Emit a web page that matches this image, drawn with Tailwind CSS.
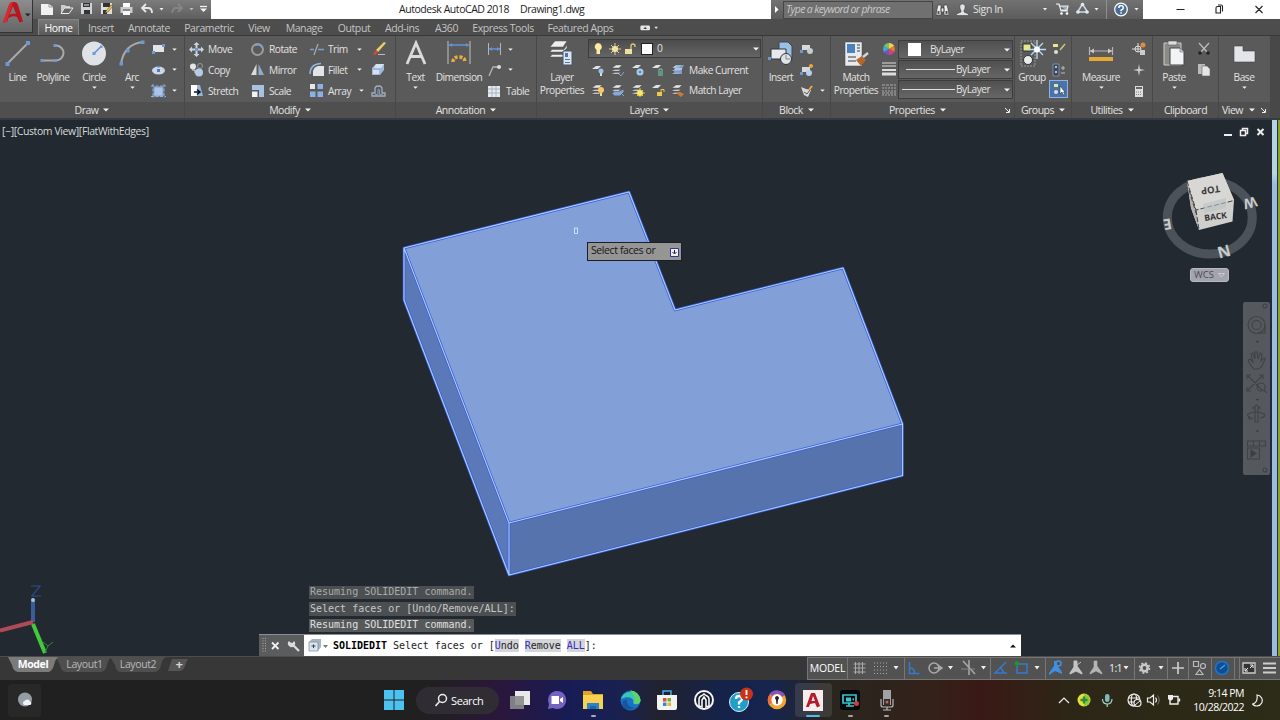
<!DOCTYPE html>
<html lang="en">
<head>
    <meta charset="UTF-8">
    <meta name="viewport" content="width=device-width, initial-scale=1.0">
    <title>Autodesk AutoCAD 2018 - Drawing1.dwg</title>
    <script src="https://cdn.jsdelivr.net/npm/@tailwindcss/browser@4"></script>
</head>
<body class="w-[1280px] h-[720px] overflow-hidden bg-[#222930] font-['Open_Sans',sans-serif] text-[10.5px] leading-none tracking-[-0.4px] whitespace-nowrap text-[#e2e2e2]">
    <!-- shared icon shapes -->
    <svg class="hidden">
        <symbol id="caret" viewBox="0 0 6 4"><path d="M0 .5h6L3 3.6z" fill="#f2f2f2"/></symbol>
        <symbol id="sheets" viewBox="0 0 14 14"><path d="M1 5l4-3h6L8 5zM1 7.500l3-1h5l2-1.500L8 8H1zM1 10.500l3-1h5l2-1.500L8 11H1z" fill="#e4e6e8" stroke="#4a4a4a" stroke-width=".4"/></symbol>
    </svg>

    <div class="flex flex-col h-[720px]">
        <!-- title bar -->
        <header class="relative flex h-[19px] shrink-0 bg-white">
            <div class="absolute left-0 top-0 z-10 flex items-center w-[33px] h-[33px] border-r border-b border-[#333] bg-linear-to-b from-[#8d8d8d] to-[#666]">
                <svg class="w-[32px] h-[32px] shrink-0" viewBox="0 0 32 32"><path d="M3 22.500L9 5q1-3 4-3h1.500q2.500 0 3.500 3l5 16.500-3.500 1-2.500-5.500q-4-2-8.500 1l-1.500 4z" fill="#bb1620"/><path d="M9.500 14.500L13 6l3 8q-3-1-6.500.5z" fill="#7a7a7a"/><path d="M9 5q1-3 4-3L6.500 22H3z" fill="#d92a34"/><path d="M25 13.500h5.500L27.750 16.500z" fill="#222"/></svg>
            </div>
            <div class="flex items-center w-[211px] pl-[39px] bg-linear-to-b from-[#7c7c7c] to-[#5e5e5e]">
                <svg class="w-[172px] h-[19px]" viewBox="39 0 172 19">
                    <path d="M41 4h8l4 3v8H41z" fill="#f1f1f1"/><path d="M49 4v3h4" fill="none" stroke="#999"/>
                    <path d="M61 5h4l1 1h4v2h-6l-3 5z" fill="#ccc"/><path d="M61 13.500L64.500 8H73l-4 5.500z" fill="#666" stroke="#eee"/>
                    <path d="M81 3h11v11H81z" fill="#cfd2d6"/><path d="M83 3h7v4h-7zM84 10h6v4h-6z" fill="#333"/><path d="M84 4.500h5v1h-5z" fill="#eee"/>
                    <path d="M101 3h11v11h-11z" fill="#dedede"/><path d="M103 3h7v4h-7zM103 10h4v4h-4z" fill="#333"/><path d="M106 11l5-6 2 1-5 6-3 1z" fill="#efbd4c" stroke="#503b15" stroke-width=".5"/>
                    <path d="M123 3h7v4h-7z" fill="#fff"/><path d="M120.500 7h12v6h-12z" fill="#c9ccd0"/><path d="M123 11h7v4h-7z" fill="#f8f8f8"/><path d="M123 10h7" stroke="#444"/>
                    <path d="M142 8h6q4 0 4 5M146 4l-4 4 4 4" fill="none" stroke="#e5e8eb" stroke-width="1.800"/><path d="M159.500 8h4l-2 2.500z" fill="#eee"/>
                    <path d="M181 8h-5q-3 0-4 5M178 4l4 4-4 4" fill="none" stroke="#858585" stroke-width="1.800"/><path d="M189.500 8h4l-2 2.500z" fill="#bbb"/>
                    <path d="M200 6.500h7" stroke="#f3f3f3" stroke-width="1.300"/><path d="M200 8.500h7L203.500 12z" fill="#f3f3f3"/>
                </svg>
            </div>
            <div class="flex items-center w-[560px] pl-[188px] gap-[11px] text-[#1c1c1c] tracking-[-0.45px]">
                <span>Autodesk AutoCAD 2018</span>
                <span>Drawing1.dwg</span>
            </div>
            <div class="flex items-center w-[372px] bg-linear-to-b from-[#727272] to-[#5c5c5c]">
                <svg class="w-[12px] h-[19px]" viewBox="0 0 12 19"><path d="M4 6v7l3.500-3.500z" fill="#fff"/></svg>
                <div class="w-[150px] h-[18px] flex items-center pl-[2px] border border-[#454545] bg-[#707070] italic text-[#c9c9c9] tracking-[-0.65px] word-spacing-[1px]">Type a keyword or phrase</div>
                <svg class="ml-[3px] w-[13px] h-[14px]" viewBox="0 0 13 14"><path d="M1 6l1-4h3v10H0zM12 6l-1-4H8v10h5zM5 5h3v4H5z" fill="#eee" stroke="#333" stroke-width=".6"/><path d="M1.500 8h2v3h-2zM9.500 8h2v3h-2z" fill="#555"/></svg>
                <svg class="ml-[7px] w-[13px] h-[14px]" viewBox="0 0 13 14"><path d="M6.500 1C3 1 3.500 5 5 7.500v1.500L.5 11v1.500h12V11L8 9V7.500C9.500 5 10 1 6.500 1z" fill="#dfe3e8" stroke="#333" stroke-width=".5"/></svg>
                <span class="ml-[4px] w-[70px]">Sign In</span>
                <svg class="w-[98px] h-[19px]" viewBox="1044 0 98 19">
                    <path d="M1044 8h4l-2 2.500zM1095.500 8h4l-2 2.500zM1135.500 8h4l-2 2.500z" fill="#eee"/>
                    <path d="M1057 4h3l2 7h7M1061 6h8l-1 4h-6" fill="#9ab" stroke="#e8edf2" stroke-width="1.200"/><circle cx="1062.500" cy="13.500" r="1.300" fill="#fff"/><circle cx="1068" cy="13.500" r="1.300" fill="#fff"/>
                    <path d="M1083.500 4l-5 8h10z" fill="none" stroke="#cdd8e4" stroke-width="1.500"/><circle cx="1083.500" cy="4.500" r="1.800" fill="#dfe9f3"/><circle cx="1079" cy="12" r="1.800" fill="#dfe9f3"/><circle cx="1088" cy="12" r="1.800" fill="#dfe9f3"/>
                    <path d="M1107.500 0v19" stroke="#909090"/>
                    <circle cx="1122" cy="9.500" r="6.300" fill="#4a6d93" stroke="#fff" stroke-width="1.200"/><path d="M1119.800 8q0-2.400 2.300-2.400T1124.300 8q0 1.200-2.200 2.200v1M1122.100 12.300v1.500" fill="none" stroke="#fff" stroke-width="1.500"/>
                </svg>
            </div>
            <svg class="w-[137px] h-[19px]" viewBox="1143 0 137 19"><path d="M1176.500 9.500h8M1216 8q0-1.500 1.500-1.500h3v6.500h-4.500zM1218 5h3q1.500 0 1.500 1.500v5M1255.500 6l7 7m0-7l-7 7" fill="none" stroke="#222" stroke-width="1.100"/></svg>
        </header>

        <!-- ribbon tabs -->
        <nav class="flex h-[17px] shrink-0 pl-[38px] bg-[#4d4d4d] text-[#c4c4c4] border-b border-[#383838] *:flex *:items-center *:justify-center *:pt-[2px]">
            <span class="w-[41px] mr-[2px] bg-linear-to-b from-[#777] to-[#595959] border border-b-0 border-[#858585] text-white">Home</span>
            <span class="w-[40px]">Insert</span>
            <span class="w-[56px]">Annotate</span>
            <span class="w-[64px]">Parametric</span>
            <span class="w-[36px]">View</span>
            <span class="w-[54px]">Manage</span>
            <span class="w-[46px]">Output</span>
            <span class="w-[50px]">Add-ins</span>
            <span class="w-[39px]">A360</span>
            <span class="w-[74px]">Express Tools</span>
            <span class="w-[81px]">Featured Apps</span>
            <svg class="ml-[17px] w-[24px] h-[16px]" viewBox="0 0 24 16"><rect x="1" y="5" width="11" height="5.500" rx="1.500" fill="#e5e5e5"/><path d="M4.500 9L6.500 6.500 8.500 9z" fill="#444"/><path d="M17 6.500h4l-2 2.500z" fill="#eee"/></svg>
        </nav>

        <!-- ribbon panels -->
        <section class="flex h-[84px] shrink-0 bg-[#484848] border-b-2 border-[#343b42] text-[10.2px] tracking-[-0.5px] *:flex *:flex-col *:shrink-0 *:border-r *:border-[#484848] *:bg-[#5a5a5a]">
            <!-- Draw -->
            <div class="w-[185px]">
                <div class="flex h-[66px] pt-[3px]">
                    <div class="flex flex-col items-center w-[35px]">
                        <svg class="w-[28px] h-[30px]" viewBox="0 0 28 30"><path d="M3 25L24 4" stroke="#a9a9a9" stroke-width="2"/><path d="M1.500 23h4v4h-4zM22 2h4v4h-4z" fill="#6d98d6"/></svg>
                        <span class="mt-[3px]">Line</span>
                    </div>
                    <div class="flex flex-col items-center w-[36px]">
                        <svg class="w-[30px] h-[30px]" viewBox="0 0 30 30"><path d="M4 21.500h14a7 7 0 0 0 0-15" fill="none" stroke="#a9a9a9" stroke-width="2"/><path d="M2.500 20h3v3h-3zM16 20h3v3h-3zM15.500 5h3v3h-3z" fill="#6d98d6"/></svg>
                        <span class="mt-[3px]">Polyline</span>
                    </div>
                    <div class="flex flex-col items-center w-[46px]">
                        <svg class="w-[28px] h-[30px]" viewBox="0 0 28 30"><circle cx="14" cy="14.500" r="12" fill="#dfe2e7"/><path d="M14 14.500l7-7" stroke="#5f8ed0" stroke-width="1.500"/><path d="M12.500 13h3v3h-3zM20 6.500h2.500V9H20z" fill="#6d98d6"/></svg>
                        <span class="mt-[3px]">Circle</span>
                        <svg class="mt-[4px] w-[5px] h-[3px]"><use href="#caret"/></svg>
                    </div>
                    <div class="flex flex-col items-center w-[30px]">
                        <svg class="w-[28px] h-[30px]" viewBox="0 0 28 30"><path d="M3 25Q6 5 25 3" fill="none" stroke="#a9a9a9" stroke-width="2"/><path d="M1.500 23h3.500v3.500H1.500zM8 10h3.500v3.500H8zM23 1.500h3.500V5H23z" fill="#6d98d6"/></svg>
                        <span class="mt-[3px]">Arc</span>
                        <svg class="mt-[4px] w-[5px] h-[3px]"><use href="#caret"/></svg>
                    </div>
                    <div class="grid grid-rows-3 h-[62px] pl-[4px] *:flex *:items-center *:gap-[6px]">
                        <div><svg class="w-[15px] h-[14px]" viewBox="0 0 15 14"><path d="M2 3h11v7H2z" fill="#e2e5e8"/><path d="M1 9h3v3H1zM11 2h3v3h-3z" fill="#6d98d6"/></svg><svg class="w-[5px] h-[3px]"><use href="#caret"/></svg></div>
                        <div><svg class="w-[15px] h-[14px]" viewBox="0 0 15 14"><ellipse cx="7.500" cy="7.500" rx="6.500" ry="4" fill="#ccd6e4"/><path d="M6 6h3v3H6zM6.500 2.500h2v2h-2z" fill="#4c7ec4"/></svg><svg class="w-[5px] h-[3px]"><use href="#caret"/></svg></div>
                        <div><svg class="w-[15px] h-[14px]" viewBox="0 0 15 14"><path d="M3 3h9v9H3z" fill="#aac3e8" stroke="#82a4d8"/><path d="M2 0v14M13 0v14M0 2h15M0 12.500h15" stroke="#91b0df" stroke-dasharray="3 1.500"/></svg><svg class="w-[5px] h-[3px]"><use href="#caret"/></svg></div>
                    </div>
                </div>
                <div class="flex items-center justify-center gap-[5px] h-[16px] bg-[#4f4f4f] text-[10.5px]">Draw <svg class="w-[6px] h-[4px]"><use href="#caret"/></svg></div>
            </div>
            <!-- Modify -->
            <div class="w-[211px]">
                <div class="grid grid-cols-[61px_59px_62px_20px] grid-rows-3 h-[66px] pt-[3px] pb-[1px] pl-[4px] *:flex *:items-center *:gap-[4px]">
                    <div><svg class="w-[15px] h-[15px]" viewBox="0 0 15 15"><path d="M7.500 0l3 3h-2v3h-2V3h-2zM7.500 15l3-3h-2V9h-2v3h-2zM0 7.500l3-3v2h3v2H3v2zM15 7.500l-3-3v2H9v2h3v2z" fill="#c9d4e2"/><path d="M6 6h3v3H6z" fill="#6d98d6"/></svg>Move</div>
                    <div><svg class="w-[15px] h-[15px]" viewBox="0 0 15 15"><circle cx="7.500" cy="7.500" r="5.500" fill="none" stroke="#9c9c9c" stroke-width="2"/><path d="M5 3.500A5.500 5.500 0 0 1 12.500 6" fill="none" stroke="#7aa0dc" stroke-width="1.500"/></svg>Rotate</div>
                    <div><svg class="w-[15px] h-[15px]" viewBox="0 0 15 15"><path d="M1 7.500h4M9 7.500h6" stroke="#779ed8" stroke-width="1.300"/><path d="M5 13l4-11" stroke="#a9a9a9" stroke-width="1.300"/></svg>Trim<svg class="ml-[5px] w-[5px] h-[3px]"><use href="#caret"/></svg></div>
                    <div><svg class="w-[15px] h-[15px]" viewBox="0 0 15 15"><path d="M5 8l8-8 2 1-8 9z" fill="#efcf63"/><path d="M2 12l3-4 2 2-3 3z" fill="#d84836"/><path d="M7 12.500h7" stroke="#bbb"/></svg></div>
                    <div><svg class="w-[15px] h-[15px]" viewBox="0 0 15 15"><circle cx="4" cy="4.500" r="3" fill="#e3e6ea"/><circle cx="11" cy="4" r="2.500" fill="none" stroke="#999"/><circle cx="10" cy="10.500" r="4" fill="#b6cbea"/><path d="M3 8h3v3" stroke="#ddd" fill="none"/></svg>Copy</div>
                    <div><svg class="w-[15px] h-[15px]" viewBox="0 0 15 15"><path d="M6.500 2v11H1z" fill="#d9dcdf"/><path d="M8.500 2v11H14z" fill="#8eacd0"/></svg>Mirror</div>
                    <div><svg class="w-[15px] h-[15px]" viewBox="0 0 15 15"><path d="M4 14V9q1-4 5-5h6v10z" fill="#e2e5e8"/><path d="M1 12Q1 2 12 1.500" fill="none" stroke="#8fb5e8" stroke-width="1.500"/></svg>Fillet<svg class="ml-[6px] w-[5px] h-[3px]"><use href="#caret"/></svg></div>
                    <div><svg class="w-[15px] h-[15px]" viewBox="0 0 15 15"><path d="M1 6l4-4h8v6l-4 5H1z" fill="#9eb9de"/><path d="M5 2h8l-3 4H3zM2 8h6v4H2z" fill="#d7e2f0"/></svg></div>
                    <div><svg class="w-[15px] h-[15px]" viewBox="0 0 15 15"><path d="M2 2h6v11H2z" fill="#fff"/><path d="M8 2h3l3 11H8z" fill="#8fb4df"/><path d="M5 9h5M8 6.500L11 9l-3 2.500" stroke="#111" stroke-width="1.500" fill="none"/></svg>Stretch</div>
                    <div><svg class="w-[15px] h-[15px]" viewBox="0 0 15 15"><path d="M2 2h12v12H9V7H2z" fill="#a9c2e4"/><path d="M2 8.500h5.500V14H2z" fill="#f0f1f3"/></svg>Scale</div>
                    <div><svg class="w-[15px] h-[15px]" viewBox="0 0 15 15"><path d="M1 1h5v5H1z" fill="#e7e7e7"/><path d="M8.500 1H14v5H8.500zM1 8.500h5.500V14H1zM8.500 8.500H14V14H8.500z" fill="#8cb0e3"/></svg>Array<svg class="ml-[4px] w-[5px] h-[3px]"><use href="#caret"/></svg></div>
                    <div><svg class="w-[15px] h-[15px]" viewBox="0 0 15 15"><path d="M1 13h13v-3h-3V6q0-3-3.500-3T4 6v4H1z" fill="none" stroke="#a3b0bf" stroke-width="1.300"/><path d="M4 11.500h3V6.500q1-1 1.500 0v5h3" fill="none" stroke="#8399b5"/></svg></div>
                </div>
                <div class="flex items-center justify-center gap-[5px] h-[16px] bg-[#4f4f4f] text-[10.5px]">Modify <svg class="w-[6px] h-[4px]"><use href="#caret"/></svg></div>
            </div>
            <!-- Annotation -->
            <div class="w-[141px]">
                <div class="flex h-[66px] pt-[3px]">
                    <div class="flex flex-col items-center w-[39px]">
                        <svg class="w-[26px] h-[30px]" viewBox="0 0 26 30"><path d="M4 25L13 4l9 21M7 17.500h12" fill="none" stroke="#dadada" stroke-width="2.800"/></svg>
                        <span class="mt-[3px]">Text</span>
                        <svg class="mt-[4px] w-[5px] h-[3px]"><use href="#caret"/></svg>
                    </div>
                    <div class="flex flex-col items-center w-[48px]">
                        <svg class="w-[26px] h-[30px]" viewBox="0 0 26 30"><path d="M2 2v23M24 2v23" stroke="#a9a9a9" stroke-width="1.300"/><path d="M3 6h20" stroke="#6592d8" stroke-width="1.500"/><path d="M3 6l3-2v4zM23 6l-3-2v4z" fill="#6592d8"/><path d="M7 23q0-5 6-5t6 5" fill="none" stroke="#e6ad3c" stroke-width="3.500" stroke-dasharray="3 1.500"/></svg>
                        <span class="mt-[3px]">Dimension</span>
                    </div>
                    <div class="grid grid-rows-3 h-[62px] pl-[4px] *:flex *:items-center *:gap-[6px]">
                        <div><svg class="w-[15px] h-[14px]" viewBox="0 0 15 14"><path d="M1.500 1v12M13.500 1v12" stroke="#b5b5b5"/><path d="M2 7h11" stroke="#6592d8" stroke-width="1.500"/><path d="M2 7l3-2v4zM13 7l-3-2v4z" fill="#6592d8"/></svg><svg class="w-[5px] h-[3px]"><use href="#caret"/></svg></div>
                        <div><svg class="w-[15px] h-[14px]" viewBox="0 0 15 14"><path d="M2 13l4-9h5" fill="none" stroke="#b5b5b5" stroke-width="1.300"/><circle cx="12" cy="4" r="2" fill="#ddd"/></svg><svg class="w-[5px] h-[3px]"><use href="#caret"/></svg></div>
                        <div class="gap-[5px]!"><svg class="w-[14px] h-[14px]" viewBox="0 0 14 14"><path d="M1 2h12v11H1z" fill="#e6e9ed"/><path d="M1 5h12M1 9h12M5 2v11M9 2v11" stroke="#9baabd" stroke-width=".8"/></svg>Table</div>
                    </div>
                </div>
                <div class="flex items-center justify-center gap-[5px] h-[16px] bg-[#4f4f4f] text-[10.5px]">Annotation <svg class="w-[6px] h-[4px]"><use href="#caret"/></svg></div>
            </div>
            <!-- Layers -->
            <div class="w-[226px]">
                <div class="flex h-[66px] pt-[3px]">
                    <div class="flex flex-col items-center w-[50px]">
                        <svg class="w-[28px] h-[30px]" viewBox="0 0 28 30"><path d="M2 8l5-6h12l-4 6zM2 13l2-2.500h12L19 6v3l-4 4zM2 18l2-2.500h12l3-4v3L15 18z" fill="#eceef0" stroke="#555" stroke-width=".5"/><path d="M15 12h9v14h-9z" fill="#dfe5ee" stroke="#456"/><path d="M17 14h3v4h-3zM17 20h5v1h-5zM17 23h5v1h-5z" fill="#4a76b4"/></svg>
                        <span class="mt-[3px]">Layer</span>
                        <span class="mt-[3px]">Properties</span>
                    </div>
                    <div class="w-[175px] pl-[1px]">
                        <div class="flex items-center w-[173px] h-[19px] pl-[3px] border border-[#3c3c3c] bg-linear-to-b from-[#4c4c4c] to-[#656565]">
                            <svg class="w-[56px] h-[16px]" viewBox="0 0 56 16"><path d="M6 2a3.800 3.800 0 0 1 2 7v4H4.500V9A3.800 3.800 0 0 1 6 2z" fill="#ffe9a0"/><circle cx="23" cy="8" r="3" fill="#fff1a5"/><path d="M23 2v12M17 8h12M19 4l8 8M27 4l-8 8" stroke="#e9dfa1" stroke-width=".9"/><path d="M33 8h7v5h-7z" fill="#efe0a2"/><path d="M39 8V5q0-2 2-2t2 2v1" fill="none" stroke="#dcca83" stroke-width="1.300"/></svg>
                            <span class="-ml-[7px] w-[12px] h-[12px] bg-white border border-[#222]"></span>
                            <span class="ml-[4px] w-[96px]">0</span>
                            <svg class="w-[6px] h-[4px]"><use href="#caret"/></svg>
                        </div>
                        <div class="flex items-center h-[21px] pl-[3px] pt-[3px] gap-[6px]">
                            <svg class="w-[14px] h-[14px]" viewBox="0 0 14 14"><path d="M1 6l4-3h5L7 6z" fill="#dfe3e7"/><circle cx="10" cy="8" r="2.500" fill="#9cc2ee"/><path d="M9 10h2v3H9z" fill="#ddd"/></svg>
                            <svg class="w-[14px] h-[14px]" viewBox="0 0 14 14"><use href="#sheets"/><path d="M8 11l2 2 3-4" stroke="#7ba5dc" fill="none"/></svg>
                            <svg class="w-[14px] h-[14px]" viewBox="0 0 14 14"><path d="M1 5l4-3h5L7 5z" fill="#dfe3e7"/><circle cx="9" cy="9" r="3.500" fill="#a8c8ef"/><circle cx="9" cy="9" r="1.300" fill="#5588cb"/></svg>
                            <svg class="w-[14px] h-[14px]" viewBox="0 0 14 14"><path d="M1 5l4-3h5L7 5z" fill="#dfe3e7"/><path d="M7 8h5v5H7z" fill="#5d9884"/><path d="M8 8V6h3v2" stroke="#88b8aa" fill="none"/></svg>
                            <svg class="w-[14px] h-[14px]" viewBox="0 0 14 14"><use href="#sheets"/><path d="M3 6l3-4h7l-2 4v5H3z" fill="#88aedf" opacity=".8"/><path d="M4 6h7" stroke="#dce8f6"/></svg>
                            <span class="-ml-[2px]">Make Current</span>
                        </div>
                        <div class="flex items-center h-[20px] pl-[3px] pt-[2px] gap-[6px]">
                            <svg class="w-[14px] h-[14px]" viewBox="0 0 14 14"><use href="#sheets"/><circle cx="10" cy="7" r="3" fill="#ffc55b"/><path d="M9 10h2v3H9z" fill="#edd9a6"/></svg>
                            <svg class="w-[14px] h-[14px]" viewBox="0 0 14 14"><use href="#sheets"/><path d="M3 9h6l3-2v2l-3 3H3zM9 9l4 4" fill="#83a9dc" stroke="#83a9dc"/></svg>
                            <svg class="w-[14px] h-[14px]" viewBox="0 0 14 14"><use href="#sheets"/><circle cx="9" cy="10" r="3" fill="#ffe65d"/><path d="M9 5v9M5 10h9M6 7l6 6M12 7l-6 6" stroke="#ffe65d" stroke-width=".8"/></svg>
                            <svg class="w-[14px] h-[14px]" viewBox="0 0 14 14"><path d="M1 5l4-3h5L7 5z" fill="#dfe3e7"/><path d="M6 9h5v4H6z" fill="#f0c84e"/><path d="M10 9V6.500h3V9" stroke="#f0c84e" fill="none"/></svg>
                            <svg class="w-[14px] h-[14px]" viewBox="0 0 14 14"><use href="#sheets"/><path d="M5 10l4-1 4 2-3 3z" fill="#d17830"/></svg>
                            <span class="-ml-[2px]">Match Layer</span>
                        </div>
                    </div>
                </div>
                <div class="flex items-center justify-center gap-[5px] h-[16px] bg-[#4f4f4f] text-[10.5px]">Layers <svg class="w-[6px] h-[4px]"><use href="#caret"/></svg></div>
            </div>
            <!-- Block -->
            <div class="w-[68px]">
                <div class="flex h-[66px] pt-[3px]">
                    <div class="flex flex-col items-center w-[36px]">
                        <svg class="w-[28px] h-[30px]" viewBox="0 0 28 30"><path d="M12 3h9l4 4v14H12z" fill="#9cbfe6" stroke="#36465a"/><path d="M4 10h15v10H4z" fill="#e6e9ec" stroke="#333"/><circle cx="19" cy="20" r="5.500" fill="#dfe3e7" stroke="#333"/><path d="M19 16v4h4" stroke="#888" fill="none"/><path d="M1 18h3v3H1z" fill="#6d98d6"/></svg>
                        <span class="mt-[3px]">Insert</span>
                    </div>
                    <div class="grid grid-rows-3 h-[62px] *:flex *:items-center *:gap-[6px]">
                        <div><svg class="w-[15px] h-[14px]" viewBox="0 0 15 14"><path d="M3 3h8v5H3z" fill="#d6dade"/><circle cx="11" cy="9" r="3" fill="#c7cbd0"/><path d="M1 8h3v3H1z" fill="#6d98d6"/></svg></div>
                        <div><svg class="w-[15px] h-[14px]" viewBox="0 0 15 14"><path d="M3 4h8v5H3z" fill="#d6dade"/><circle cx="10" cy="10" r="3" fill="#b7cfe9"/><path d="M1 9h3v3H1z" fill="#6d98d6"/><circle cx="12" cy="3" r="2" fill="#f0a63c"/></svg></div>
                        <div><svg class="w-[15px] h-[14px]" viewBox="0 0 15 14"><path d="M2 3l5 2 5 1-3 7-4-2z" fill="#d6dade"/><path d="M5 8l3 2 5-7" stroke="#555" fill="none"/><path d="M10 6l3-4" stroke="#f0a63c" stroke-width="2"/></svg><svg class="w-[5px] h-[3px]"><use href="#caret"/></svg></div>
                    </div>
                </div>
                <div class="flex items-center justify-center gap-[5px] h-[16px] bg-[#4f4f4f] text-[10.5px]">Block <svg class="w-[6px] h-[4px]"><use href="#caret"/></svg></div>
            </div>
            <!-- Properties -->
            <div class="w-[184px]">
                <div class="flex h-[66px] pt-[3px]">
                    <div class="flex flex-col items-center w-[50px]">
                        <svg class="w-[28px] h-[30px]" viewBox="0 0 28 30"><path d="M3 3h17v24H3z" fill="#e7eaee" stroke="#444" stroke-width=".5"/><path d="M5 5h8v9H5z" fill="#4b82bb"/><path d="M15 6h3M15 9h3M15 12h3M6 18h8M6 22h8" stroke="#777" stroke-width="1.300"/><path d="M14 21l6-4 4 4-5 6z" fill="#b5662a"/><path d="M21 18l5-4" stroke="#d5d5d5" stroke-width="2.500"/></svg>
                        <span class="mt-[3px]">Match</span>
                        <span class="mt-[3px]">Properties</span>
                    </div>
                    <div class="grid grid-rows-3 w-[17px] h-[61px] pl-[1px] items-center">
                        <svg class="w-[14px] h-[14px]" viewBox="0 0 14 14"><path d="M7 7V1a6 6 0 0 1 5.200 3z" fill="#f0d54b"/><path d="M7 7l5.200-3a6 6 0 0 1 0 6z" fill="#e57834"/><path d="M7 7l5.200 3A6 6 0 0 1 7 13z" fill="#d64078"/><path d="M7 7v6a6 6 0 0 1-5.200-3z" fill="#6d56bd"/><path d="M7 7l-5.200 3a6 6 0 0 1 0-6z" fill="#46a4d0"/><path d="M7 7L1.800 4A6 6 0 0 1 7 1z" fill="#76c36c"/></svg>
                        <svg class="w-[14px] h-[14px]" viewBox="0 0 14 14"><path d="M0 1h14M0 4h14" stroke="#ddd"/><path d="M0 8h14" stroke="#ddd" stroke-width="2"/><path d="M0 12h14" stroke="#ddd" stroke-width="3"/></svg>
                        <svg class="w-[14px] h-[14px]" viewBox="0 0 14 14"><path d="M0 2h14M0 10h14" stroke="#aaa" stroke-dasharray="3 1"/><path d="M0 5h14M0 8h14M0 12h14" stroke="#aaa" stroke-dasharray="2 1"/></svg>
                    </div>
                    <div class="flex flex-col gap-[1px] pt-[1px] *:flex *:items-center *:w-[115px] *:h-[19px] *:border *:border-[#3c3c3c] *:bg-linear-to-b *:from-[#505050] *:to-[#666]">
                        <div><span class="ml-[9px] w-[13px] h-[13px] bg-white"></span><span class="ml-[9px] w-[74px]">ByLayer</span><svg class="w-[6px] h-[4px]"><use href="#caret"/></svg></div>
                        <div><span class="ml-[7px] w-[49px] h-[1px] bg-[#ddd]"></span><span class="ml-[1px] w-[48px]">ByLayer</span><svg class="w-[6px] h-[4px]"><use href="#caret"/></svg></div>
                        <div><span class="ml-[3px] w-[53px] h-[1px] bg-[#ddd]"></span><span class="ml-[1px] w-[48px]">ByLayer</span><svg class="w-[6px] h-[4px]"><use href="#caret"/></svg></div>
                    </div>
                </div>
                <div class="flex items-center h-[16px] pl-[58px] pr-[4px] gap-[5px] bg-[#4f4f4f] text-[10.5px]">Properties <svg class="w-[6px] h-[4px]"><use href="#caret"/></svg><svg class="ml-auto w-[5px] h-[5px]" viewBox="0 0 5 5"><path d="M0 0l4 4M4.500 1v3.500H1" stroke="#eee" fill="none"/></svg></div>
            </div>
            <!-- Groups -->
            <div class="w-[57px]">
                <div class="flex h-[66px] pt-[3px]">
                    <div class="flex flex-col items-center w-[34px]">
                        <svg class="w-[28px] h-[30px]" viewBox="0 0 28 30"><path d="M3 2h14v25H3z" fill="none" stroke="#999" stroke-dasharray="2 1"/><path d="M5 5h8v7H5z" fill="#e6e88b" stroke="#333"/><circle cx="10" cy="21" r="4.500" fill="#e9ecef" stroke="#333"/><path d="M19 1v19M10 10.500h18M13 4l12 12M25 4L13 16" stroke="#b9dcf5" stroke-width="1.300"/><circle cx="19" cy="10.500" r="3" fill="#fff"/></svg>
                        <span class="mt-[3px]">Group</span>
                    </div>
                    <div class="grid grid-rows-3 w-[19px] h-[62px] *:flex *:items-center *:justify-center">
                        <div><svg class="w-[14px] h-[14px]" viewBox="0 0 14 14"><path d="M1 2h5v3H1z" fill="#e6e88b"/><circle cx="4" cy="10" r="2" fill="#ddd"/><path d="M8 8l5-6" stroke="#cfd06a" stroke-width="1.300"/></svg></div>
                        <div><svg class="w-[14px] h-[14px]" viewBox="0 0 14 14"><path d="M1 1h6v12H1z" fill="#3e4a58" stroke="#8aa4c4" stroke-width=".7"/><path d="M3 3h2v2H3zM3 8h2v2H3z" fill="#a9c4e4"/><path d="M9 5h4M11 3v4M9 10h4" stroke="#bbb"/></svg></div>
                        <div class="w-[19px] h-[18px] bg-[#4973a9] border border-[#8db4e4]"><svg class="w-[14px] h-[14px]" viewBox="0 0 14 14"><path d="M2 2h4v3H2z" fill="#e6e88b"/><circle cx="4" cy="10" r="2" fill="#ddd"/><path d="M8 4v8l2-2 1.500 3 1.500-1-1.500-2H13z" fill="#fff" stroke="#222" stroke-width=".5"/></svg></div>
                    </div>
                </div>
                <div class="flex items-center justify-center gap-[5px] h-[16px] bg-[#4f4f4f] text-[10.5px]">Groups <svg class="w-[6px] h-[4px]"><use href="#caret"/></svg></div>
            </div>
            <!-- Utilities -->
            <div class="w-[81px]">
                <div class="flex h-[66px] pt-[3px]">
                    <div class="flex flex-col items-center w-[58px]">
                        <svg class="w-[28px] h-[30px]" viewBox="0 0 28 30"><path d="M2.500 8v8M25.500 8v8M3 12h22" stroke="#b5b5b5" stroke-width="1.200"/><path d="M3 12l4-2.500v5zM25 12l-4-2.500v5z" fill="#ccc"/><path d="M2 18h24v4H2z" fill="#e6a934"/></svg>
                        <span class="mt-[3px]">Measure</span>
                        <svg class="mt-[4px] w-[5px] h-[3px]"><use href="#caret"/></svg>
                    </div>
                    <div class="grid grid-rows-3 w-[18px] h-[62px] items-center justify-items-center">
                        <svg class="w-[14px] h-[14px]" viewBox="0 0 14 14"><circle cx="6" cy="7" r="3" fill="none" stroke="#ddd"/><path d="M0 7h9M6 1v9" stroke="#ddd"/><circle cx="11" cy="3" r="2.500" fill="#e58b3a"/><path d="M8 8h5v5H8z" fill="#ccc"/></svg>
                        <svg class="w-[14px] h-[14px]" viewBox="0 0 14 14"><path d="M7 1l1 5 5 1-5 1-1 5-1-5-5-1 5-1z" fill="#ccc"/></svg>
                        <svg class="w-[14px] h-[14px]" viewBox="0 0 14 14"><path d="M3 2h8v11H3z" fill="#ddd"/><path d="M4 3h6v2H4z" fill="#666"/><path d="M4 8h6M4 10.500h6" stroke="#888" stroke-dasharray="1 1"/></svg>
                    </div>
                </div>
                <div class="flex items-center justify-center gap-[5px] h-[16px] bg-[#4f4f4f] text-[10.5px]">Utilities <svg class="w-[6px] h-[4px]"><use href="#caret"/></svg></div>
            </div>
            <!-- Clipboard -->
            <div class="w-[66px]">
                <div class="flex h-[66px] pt-[3px]">
                    <div class="flex flex-col items-center w-[42px]">
                        <svg class="w-[28px] h-[30px]" viewBox="0 0 28 30"><path d="M4 4h17v22H4z" fill="#8a8a86" stroke="#ccc"/><path d="M8 2h9v4H8z" fill="#ddd" stroke="#555" stroke-width=".6"/><path d="M10 9h10l4 4v13H10z" fill="#f2f3f5" stroke="#444"/><path d="M20 9v4h4" fill="#cbd0d6" stroke="#777" stroke-width=".6"/></svg>
                        <span class="mt-[3px]">Paste</span>
                        <svg class="mt-[4px] w-[5px] h-[3px]"><use href="#caret"/></svg>
                    </div>
                    <div class="grid grid-rows-3 w-[18px] h-[62px] items-center justify-items-center">
                        <svg class="w-[14px] h-[14px]" viewBox="0 0 14 14"><path d="M2 1l8 9M12 1L4 10" stroke="#bbb" stroke-width="1.300"/><circle cx="3" cy="11" r="1.800" fill="#222"/><circle cx="11" cy="11" r="1.800" fill="#222"/></svg>
                        <svg class="w-[14px] h-[14px]" viewBox="0 0 14 14"><path d="M1 1h7v10H1z" fill="#bbb"/><path d="M5 3h5l3 3v7H5z" fill="#e6e6e6" stroke="#666" stroke-width=".6"/></svg>
                    </div>
                </div>
                <div class="flex items-center justify-center h-[16px] bg-[#4f4f4f] text-[10.5px]">Clipboard</div>
            </div>
            <!-- View -->
            <div class="w-[52px]">
                <div class="flex h-[66px] pt-[3px]">
                    <div class="flex flex-col items-center w-[50px]">
                        <svg class="w-[28px] h-[30px]" viewBox="0 0 28 30"><path d="M4 7h9v5h12v11H4z" fill="#e3e5e8" stroke="#444" stroke-width=".6"/></svg>
                        <span class="mt-[3px]">Base</span>
                        <svg class="mt-[4px] w-[5px] h-[3px]"><use href="#caret"/></svg>
                    </div>
                </div>
                <div class="flex items-center gap-[6px] h-[16px] pl-[3px] pr-[4px] bg-[#4f4f4f] text-[10.5px]">View <svg class="w-[6px] h-[4px]"><use href="#caret"/></svg><svg class="ml-auto w-[5px] h-[5px]" viewBox="0 0 5 5"><path d="M0 0l4 4M4.500 1v3.500H1" stroke="#eee" fill="none"/></svg></div>
            </div>
        </section>

        <!-- drawing area -->
        <main class="relative h-[536px] shrink-0 bg-[#222930]">
            <svg class="absolute left-0 top-0 w-[1273px] h-[536px]" viewBox="0 120 1273 536">
                <path d="M404 248L629 192 675 310 843 268 902.500 424 509 523z" fill="#829fd8"/>
                <path d="M404 248V300L509 575V523z" fill="#5b78b8"/>
                <path d="M509 523L902.500 424V475.500L509 575z" fill="#5673ae"/>
                <g fill="none" stroke-linejoin="round">
                    <path d="M404 248L629 192 675 310 843 268 902.500 424V475.500L509 575 404 300zL509 523 902.500 424M509 523V575" stroke="#3460d4" stroke-width="2.600"/>
                    <path d="M404 248L629 192 675 310 843 268 902.500 424V475.500L509 575 404 300zL509 523 902.500 424M509 523V575" stroke="#b3c9fc" stroke-width="1.100"/>
                </g>
                <path d="M574.500 228h3v5.500h-3z" fill="none" stroke="#d4e6ff" stroke-width=".9"/>

                <!-- view cube -->
                <ellipse cx="1209.800" cy="217.500" rx="42.500" ry="36.500" fill="none" stroke="#4b5259" stroke-width="9"/>
                <path d="M1187 181L1222.500 173 1234 200 1232.500 221.500 1199 230 1191 208z" fill="#cfcfcd"/>
                <path d="M1187 181L1222.500 173 1234 200 1196 210z" fill="#d8d7d4"/>
                <path d="M1187 181L1196 210 1199 230 1191 208z" fill="#b4b4b2"/>
                <path d="M1187 181L1196 210 1234 200.500M1196 210l3 20M1189 190l8 26" fill="none" stroke="#444" stroke-dasharray="5 2"/>
                <path d="M1203 204l23-6v10l-22 5z" fill="#b9c3c4" opacity=".6"/>
                <g font-family="Open Sans" font-weight="700" text-anchor="middle" letter-spacing="0">
                    <text transform="translate(1210 186.500) rotate(172)" font-size="9.500" fill="#3b3b3b">TOP</text>
                    <text transform="translate(1216 219.500) rotate(-8)" font-size="8.500" fill="#333">BACK</text>
                    <text transform="translate(1249 198) rotate(165)" font-size="14" fill="#c9cccd">W</text>
                    <text transform="translate(1166.500 219) rotate(170)" font-size="15" fill="#c9cccd">E</text>
                    <text transform="translate(1222.500 246) rotate(165)" font-size="16" fill="#c9cccd">N</text>
                </g>

                <!-- UCS icon -->
                <path d="M33 622V600" stroke="#3a5b9c" stroke-width="4"/><circle cx="33" cy="600" r="2" fill="#a9bfe0"/>
                <path d="M33 622L0 630.500" stroke="#b04a58" stroke-width="4"/>
                <path d="M33 624L45 653" stroke="#44c83e" stroke-width="4"/>
                <path d="M31 586h9L32 596h9" fill="none" stroke="#274f94" stroke-width="1.200"/>
                <path d="M43 642l5 4 5-4M48 646l-3 6" fill="none" stroke="#2b8c32"/>
            </svg>

            <div class="absolute left-[2px] top-[6px] text-[#d8dadb]">[−][Custom View][FlatWithEdges]</div>
            <svg class="absolute left-[1222px] top-[6px] w-[46px] h-[12px]" viewBox="0 0 46 12"><path d="M2 8h8v2H2z" fill="#eee"/><path d="M18.500 4.500h5v5h-5zM20.500 4V2.500h5v5H24" fill="none" stroke="#eee" stroke-width="1.500"/><path d="M35.500 3l6 6m0-6l-6 6" stroke="#eee" stroke-width="2"/></svg>

            <!-- dynamic input prompt -->
            <div class="absolute left-[587px] top-[122px] flex items-center w-[95px] h-[19px] pl-[3px] bg-[#959596] border border-[#1b1e22] text-[#161616]">
                <span class="w-[79px] pb-[2px]">Select faces or</span>
                <svg class="w-[9px] h-[9px] mt-[2px]" viewBox="0 0 9 9"><path d="M.5.500h8v8h-8z" fill="#eee" stroke="#3c3197"/><path d="M2.500 4L4.500 6 6.500 4M4.500 2v3" stroke="#222" fill="none"/></svg>
            </div>

            <div class="absolute left-[1190px] top-[148px] flex items-center justify-between w-[39px] h-[14px] pl-[3px] pr-[3px] rounded-[3px] bg-[#a3a4ae] border border-[#b8b9c2] text-[9.5px] text-[#484b54] tracking-normal">WCS<svg class="w-[7px] h-[5px]" viewBox="0 0 7 5"><path d="M.5.500h6l-3 3.500z" fill="none" stroke="#c9cad3"/></svg></div>

            <!-- navigation bar -->
            <svg class="absolute left-[1243px] top-[182px] w-[27px] h-[173px]" viewBox="1243 302 27 173">
                <rect x="1243" y="302" width="27" height="173" rx="2" fill="#55595d"/>
                <g fill="none" stroke="#3f4347" stroke-width="1.100">
                    <circle cx="1265" cy="306" r="2"/><circle cx="1265" cy="470" r="2"/>
                    <circle cx="1256.500" cy="325" r="8.500"/><circle cx="1256.500" cy="325" r="4.500"/><path d="M1258 333h7v-8"/>
                    <path d="M1252 367q-3-4-4-7l2-1 3 3-2-8 2-1 2 6v-7h2l1 7 2-6 2 1-1 7 3-3 1 1-3 7q-3 4-8 3z"/>
                    <path d="M1248 376l14 14M1262 376l-14 14M1247 379v-4h4M1259 375h4v4M1247 387v4h4"/><circle cx="1261" cy="387" r="4"/><path d="M1264 390l3 3"/>
                    <path d="M1255 408v14h3v-14l2 0-3.500-3-3.500 3zM1253 419q-7-3-5-5 8-4 16 0 3 3-4 4M1250 420l-2-4"/>
                    <path d="M1247.500 441h18v5h-18zM1253.500 441v5M1259.500 441v5M1247.500 448h12v11h-12z"/><path d="M1251 450v7l5-3.500z" fill="#3a3e42"/>
                </g>
                <path d="M1256 341h3l-1.500 2zM1256 399h3l-1.500 2zM1256 430.500h3l-1.500 2z" fill="#33373b"/>
            </svg>

            <!-- strip of the desktop behind the window -->
            <div class="absolute right-0 top-0 flex w-[8px] h-[536px]">
                <div class="w-[5px] bg-linear-to-b from-[#b7d3e6] from-10% to-[#9dbbe0] to-12%"></div>
                <div class="w-[1px] bg-[#26323a]"></div>
                <div class="w-[2px] bg-[#8ba32a]"></div>
            </div>

            <!-- command window -->
            <div class="absolute left-[259px] bottom-0 w-[762px]">
                <div class="flex flex-col items-start gap-[3px] pl-[50px] pb-[2px] font-['DejaVu_Sans_Mono',monospace] text-[10px] tracking-normal text-[#e0e0e0] *:h-[13.5px] *:px-[1px] *:flex *:items-center *:bg-[#4b4f51]">
                    <span class="text-[#a9abac]">Resuming SOLIDEDIT command.</span>
                    <span class="text-[#c6c7c8]">Select faces or [Undo/Remove/ALL]:</span>
                    <span class="bg-[#56595a]!">Resuming SOLIDEDIT command.</span>
                </div>
                <div class="flex items-center h-[22px] bg-white border-t border-[#8b8f93]">
                    <svg class="w-[45px] h-[21px] bg-[#5b5c5e]" viewBox="0 0 45 21"><path d="M4 3v15M6.500 3v15" stroke="#aaa" stroke-dasharray="1 1.500"/><path d="M13 7.500l6.500 6.500m0-6.500L13 14" stroke="#eee" stroke-width="1.800"/><path d="M33 9l7 7" stroke="#dcdcdc" stroke-width="2.300"/><path d="M30 6a3.500 3.500 0 0 0 5 5 3.500 3.500 0 0 0 0-5l-1.500 2-2-.5z" fill="#dcdcdc"/></svg>
                    <svg class="ml-[4px] w-[25px] h-[16px]" viewBox="0 0 25 16"><path d="M1 4l3-3h9v8l-3 4H1z" fill="#aab4c2"/><path d="M1 4h9v9H1z" fill="#dde3ec" stroke="#7b8899" stroke-width=".7"/><path d="M3.500 8h4M5.500 6.500v3.500" stroke="#345"/><path d="M15 7h5l-2.500 3z" fill="#777"/></svg>
                    <div class="font-['DejaVu_Sans_Mono',monospace] text-[10px] tracking-[-0.03px] text-[#222]"><b class="text-black">SOLIDEDIT</b> Select faces or [<span class="py-[1px] bg-[#d3d5d8]"><span class="text-[#3a2bc0]">U</span>ndo</span> <span class="py-[1px] bg-[#d3d5d8]"><span class="text-[#3a2bc0]">R</span>emove</span> <span class="py-[1px] bg-[#d3d5d8] text-[#3a2bc0]">ALL</span>]:</div>
                    <svg class="ml-auto mr-[5px] w-[6px] h-[4px]" viewBox="0 0 6 4"><path d="M0 3.500h6L3 .5z" fill="#111"/></svg>
                </div>
            </div>
        </main>

        <!-- layout tabs and status bar -->
        <footer class="flex justify-between h-[24px] shrink-0 bg-[#373737] border-t border-[#4c4c4c]">
            <div class="relative flex h-[15px] text-[#b9b9b9] *:relative *:flex *:items-center *:justify-center *:pb-[1px]">
                <svg class="absolute! left-0 top-0 w-[200px] h-[16px] pb-0!" viewBox="0 0 200 16"><path d="M56 0h56q-4 2-5 8t-6 7H66q-5 0-6-7zM110 0h56q-4 2-5 8t-6 7h-34q-5 0-6-7z" fill="#4f4f4f"/><path d="M172 2h16q-2 3-3 7t-5 5h-12q2-6 4-12z" fill="#555"/><path d="M8 0h50q-3 3-4 8t-5 7H18q-5-1-6-7z" fill="#7b7b7b"/></svg>
                <b class="w-[50px] ml-[8px] text-white">Model</b>
                <span class="w-[53px]">Layout1</span>
                <span class="w-[54px]">Layout2</span>
                <b class="w-[28px] text-[13px] text-[#d5d5d5]">+</b>
            </div>
            <div class="flex h-[23px] bg-[#525252] border-y border-[#757575]">
                <div class="flex items-center justify-center w-[41px] border-x border-[#757575] text-white tracking-[-0.2px]">MODEL</div>
                <svg class="w-[432px] h-[21px]" viewBox="848 658 432 21">
                    <path d="M855.500 662v12M859 662v12M862.500 662v12M853.500 664h12M853.500 668h12M853.500 672h12" stroke="#a9a9a9"/>
                    <path d="M874 663h13M874 666.500h13M874 670h13M874 673.500h13" stroke="#a9a9a9" stroke-dasharray="1 2"/>
                    <path d="M893.500 666h5l-2.500 3.500zM948 666h5l-2.500 3.500zM981 666h5l-2.500 3.500zM1034.500 666h5l-2.500 3.500zM1123.500 666h5l-2.500 3.500zM1158.500 666h5l-2.500 3.500z" fill="#eee"/>
                    <path d="M904.500 657v23M990.500 657v23M1045.500 657v23M1134.500 657v23M1167.500 657v23M1188.500 657v23M1211.500 657v23M1234.500 657v23M1239.500 657v23" stroke="#777"/>
                    <g fill="none" stroke="#3579d0" stroke-width="1.500"><path d="M909.500 662v11.500h10M909.500 668q5 0 5 5"/><path d="M1006 662l-11 11h12M1001 668l3 5"/><path d="M1018 664h9v9h-10v-7"/></g>
                    <circle cx="1017" cy="663.500" r="2.300" fill="#149c2d"/>
                    <g fill="none" stroke="#aaa" stroke-width="1.500"><circle cx="934" cy="668" r="5"/><path d="M934 668h8M938 665l4 3-4 3"/><path d="M963 661l12 13M969 660v15"/></g>
                    <path d="M961 669h14" stroke="#888"/>
                    <path d="M1054 661h3v4l5 7v2l-7-3-6 4v-2l5-7z" fill="#3f8fe4"/><circle cx="1058.500" cy="663.500" r="2.500" fill="none" stroke="#3f8fe4" stroke-width="1.500"/>
                    <path d="M1074 661h3v5l5 7v1l-6-3-6 3v-1l4-6zM1077 665l4-3" fill="#c4c4c4" stroke="#c4c4c4"/>
                    <path d="M1094 661h3v5l5 7v1l-6-3-6 3v-1l4-6z" fill="#b5b5b5" stroke="#b5b5b5" stroke-width=".6"/>
                    <circle cx="1144.500" cy="668" r="3.200" fill="none" stroke="#c8c8c8" stroke-width="2.600"/><circle cx="1144.500" cy="668" r="5" fill="none" stroke="#c8c8c8" stroke-width="1.600" stroke-dasharray="2 1.930"/>
                    <path d="M1178 662v12M1172 668h12" stroke="#ccc" stroke-width="1.700"/>
                    <path d="M1193.500 661.500h5v5h-5zM1199.500 669.500l-3.500 5h7z" fill="none" stroke="#bbb" stroke-width="1.200"/><circle cx="1203" cy="666" r="2.500" fill="none" stroke="#bbb" stroke-width="1.200"/>
                    <circle cx="1222" cy="668" r="6.500" fill="#0d4f91" stroke="#1a76cf" stroke-width="1.500"/><path d="M1220 669l5-4" stroke="#4aa0f0" stroke-width="1.300"/>
                    <path d="M1243 663h12v10h-12z" fill="#333" stroke="#ccc" stroke-width="1.300"/><path d="M1245 671l3-3M1253 665l-3 3M1245 668v3h3M1250 665h3v3" stroke="#eee" fill="none"/>
                    <path d="M1263 663.500h13M1263 668h13M1263 672.500h13" stroke="#ccc" stroke-width="1.800"/>
                    <text x="1109" y="672" font-size="10.500" fill="#eee" font-family="Open Sans" letter-spacing="-.6">1:1</text>
                </svg>
            </div>
        </footer>

        <!-- Windows taskbar -->
        <div class="flex items-center h-[40px] shrink-0 bg-[linear-gradient(90deg,#202020_0,#202020_430px,#2b163c_500px,#171c55_570px,#192150_620px,#22222e_660px,#15224a_720px,#16254e_770px,#29251f_830px,#33221a_930px,#3a1915_980px,#2c2616_1070px,#2c2c18_1280px)]">
            <div class="flex items-center justify-center w-[33px] h-[33px] ml-[8px] rounded bg-[#282828]">
                <svg class="w-[16px] h-[16px]" viewBox="0 0 16 16"><circle cx="8" cy="7.500" r="7" fill="#959ca3"/><path d="M7 13a2.200 2.200 0 0 1 .5-4 3 3 0 0 1 5.500.5 1.800 1.800 0 0 1 0 3.500z" fill="#eef2f6"/></svg>
            </div>
            <svg class="ml-[343px] w-[20px] h-[20px]" viewBox="0 0 20 20"><path d="M0 0h9.500v9.500H0zM10.500 0H20v9.500h-9.500zM0 10.500h9.500V20H0zM10.500 10.500H20V20h-9.500z" fill="#4cc2f1"/></svg>
            <div class="flex items-center gap-[3px] w-[83px] h-[27px] ml-[12px] pl-[18px] rounded-full bg-[#302c34] text-[11px] text-white">
                <svg class="w-[14px] h-[14px]" viewBox="0 0 14 14"><circle cx="8.500" cy="5.500" r="4" fill="none" stroke="#eee" stroke-width="1.500"/><path d="M5.500 8.500l-4 4.500" stroke="#eee" stroke-width="1.600"/></svg>Search
            </div>
            <div class="flex ml-[3px] *:relative *:flex *:items-center *:justify-center *:w-[36.65px] *:h-[34px]">
                <div><svg class="w-[22px] h-[22px]" viewBox="0 0 22 22"><path d="M6 2h15v14H6z" fill="#e9e9e9"/><path d="M1 7h14v13H1z" fill="#8b8b8b" opacity=".9"/></svg></div>
                <div><svg class="w-[20px] h-[20px]" viewBox="0 0 20 20"><path d="M10 1a9 9 0 1 1-4 17l-5 1 1-5A9 9 0 0 1 10 1z" fill="#7462c2"/><path d="M4.500 6h7.500v8H4.500zM13 9l3-2v6l-3-2z" fill="#fff"/></svg></div>
                <div><svg class="w-[21px] h-[20px]" viewBox="0 0 21 20"><path d="M0 1h8l2 3h10v14H0z" fill="#e0a32a"/><path d="M0 5h20v14H0z" fill="#f9d152"/><path d="M4 13h12v6H4z" fill="#2b83cc"/><path d="M7 16h6v3H7z" fill="#1d66a8"/></svg><span class="absolute bottom-0 w-[5px] h-[2px] rounded-full bg-[#a7abc2]"></span></div>
                <div><svg class="w-[21px] h-[21px]" viewBox="0 0 21 21"><circle cx="10.500" cy="10.500" r="10" fill="#1b6fc4"/><path d="M1 9a10 10 0 0 1 19.500 1c0 5-6 5-7.500 3 2-4-4-8-12-4z" fill="#39c6b4"/><path d="M10 .6A10 10 0 0 1 20.500 10c0 4-4 4.500-6.500 3.500 2-4 0-9-4-12.900z" fill="#62d267"/><path d="M7 10q-1 7 8 8-8 4-12-2-2-7 4-6z" fill="#1656a0"/></svg></div>
                <div><svg class="w-[20px] h-[21px]" viewBox="0 0 20 21"><path d="M6 5V1h8v4" fill="none" stroke="#42aee6" stroke-width="1.500"/><path d="M0 5h20v13q0 2-2 2H2q-2 0-2-2z" fill="#f4f4f5"/><path d="M6 8h3.500v3.500H6z" fill="#e04f35"/><path d="M10.500 8H14v3.500h-3.500z" fill="#73ab36"/><path d="M6 12.500h3.500V16H6z" fill="#3486d8"/><path d="M10.500 12.500H14V16h-3.500z" fill="#efb32e"/></svg></div>
                <div><svg class="w-[20px] h-[20px]" viewBox="0 0 20 20"><circle cx="10" cy="10" r="9" fill="#161a2c" stroke="#f6f6f6" stroke-width="2"/><path d="M5 16V9q0-2 2-3t3-2q1 1 3 2t2 3v7l-3 1v-7l-2-3-2 3v7z" fill="#161a2c" stroke="#f6f6f6" stroke-width="1.600"/></svg></div>
                <div><svg class="w-[26px] h-[26px]" viewBox="0 0 26 26"><circle cx="12" cy="15" r="9.500" fill="#239ecb" stroke="#d9f1fa"/><path d="M9 12q0-3 3-3t3 3q0 1.500-3 3.500v2M12 19v2" fill="none" stroke="#fff" stroke-width="2.300"/><circle cx="19.500" cy="7" r="6.500" fill="#c93418"/><path d="M19.500 3v5M19.500 9.500v1.800" stroke="#fff" stroke-width="1.800"/></svg></div>
                <div><svg class="w-[20px] h-[20px]" viewBox="0 0 20 20"><circle cx="10" cy="10" r="7.500" fill="#fff" stroke="#f0a431" stroke-width="3.500"/><path d="M4 5a7.500 7.500 0 0 1 12.500 1" fill="none" stroke="#8653c0" stroke-width="3.500"/><path d="M4 5.500a7.500 7.500 0 0 0-.5 8" fill="none" stroke="#ef6c3b" stroke-width="3.500"/><path d="M10 6a2 2 0 0 1 1 3.700l-.4 4.300h-1.200L9 9.700A2 2 0 0 1 10 6z" fill="#222"/></svg></div>
                <div class="rounded bg-white/10"><svg class="w-[20px] h-[21px]" viewBox="0 0 20 21"><path d="M0 0h20v21H0z" fill="#f7ecec"/><path d="M3 17L8 3h4l5 13-3 1.500-2-4.500-5 1-1 3z" fill="#b31c2b"/><path d="M8.500 11L10 6l2 5z" fill="#f7ecec"/></svg><span class="absolute bottom-0 w-[14px] h-[2px] rounded-full bg-[#5bb8e6]"></span></div>
                <div><svg class="w-[20px] h-[20px]" viewBox="0 0 20 20"><rect width="20" height="20" rx="3" fill="#050708"/><path d="M3 5h13v8H3zM9 13v3M6 16h8" fill="none" stroke="#39c5cd" stroke-width="1.700"/><path d="M6 7.500h5v4H6zM12 9l2-1v3z" fill="#39c5cd"/><circle cx="16.500" cy="13.500" r="2.500" fill="#d23b3b"/></svg><span class="absolute bottom-0 w-[5px] h-[2px] rounded-full bg-[#aaa09c]"></span></div>
                <div><svg class="w-[14px] h-[21px]" viewBox="0 0 14 21"><path d="M3 0h8v15H3z" fill="#a2a2a5"/><path d="M1 9v6q0 2 2 2h8q2 0 2-2V9M7 17v3M3 20h8" fill="none" stroke="#b9b9bb" stroke-width="1.200"/><path d="M4 9h6v6H4z" fill="#302f32"/><circle cx="7" cy="12" r="1.500" fill="#ce6340"/></svg><span class="absolute bottom-0 w-[5px] h-[2px] rounded-full bg-[#aaa09c]"></span></div>
            </div>
            <svg class="ml-[153px] w-[126px] h-[30px]" viewBox="1058 685 126 30">
                <path d="M1059 703l5-5 5 5" fill="none" stroke="#eee" stroke-width="1.200"/>
                <circle cx="1084" cy="700" r="6.500" fill="#e8df3c"/><path d="M1084 694a6 6 0 0 1 0 12z" fill="#8bc83c"/><path d="M1084 696.500v7M1080.500 700h7" stroke="#268c3e" stroke-width="2.300"/>
                <rect x="1105" y="694" width="4.500" height="8" rx="2.200" fill="#7fb8b5"/><path d="M1102.500 699q0 5 4.700 5t4.800-5M1107.200 704v3" fill="none" stroke="#a8d4d0" stroke-width="1.200"/>
                <g fill="none" stroke="#eee" stroke-width="1.200"><circle cx="1134" cy="700" r="6"/><ellipse cx="1134" cy="700" rx="2.700" ry="6"/><path d="M1128 698h12M1128 702h7"/></g><circle cx="1137.500" cy="703" r="3.500" fill="#29281a" stroke="#eee" stroke-width="1.200"/><path d="M1135 705l5-4" stroke="#eee"/>
                <path d="M1147.500 698h2.500l3.500-3v10l-3.500-3h-2.500zM1155.500 697.500q2 2.500 0 5" fill="none" stroke="#eee" stroke-width="1.200"/><path d="M1157.500 695.500q3.500 4.500 0 9" fill="none" stroke="#777"/>
                <path d="M1170 696.500h8v7.500h-8zM1179.500 698.500v3" fill="none" stroke="#eee" stroke-width="1.400"/><path d="M1168 695h5v4q-2 3-5 0z" fill="#eee"/>
            </svg>
            <div class="flex flex-col items-end gap-[3px] w-[60px] text-white tracking-[-0.5px]">
                <span>9:14 PM</span>
                <span>10/28/2022</span>
            </div>
            <svg class="ml-[8px] w-[12px] h-[13px]" viewBox="0 0 12 13"><path d="M5 1a5.500 5.500 0 1 1-4.500 9Q6 9 5 1z" fill="none" stroke="#eee" stroke-width="1.200"/></svg>
        </div>
    </div>
</body>
</html>
